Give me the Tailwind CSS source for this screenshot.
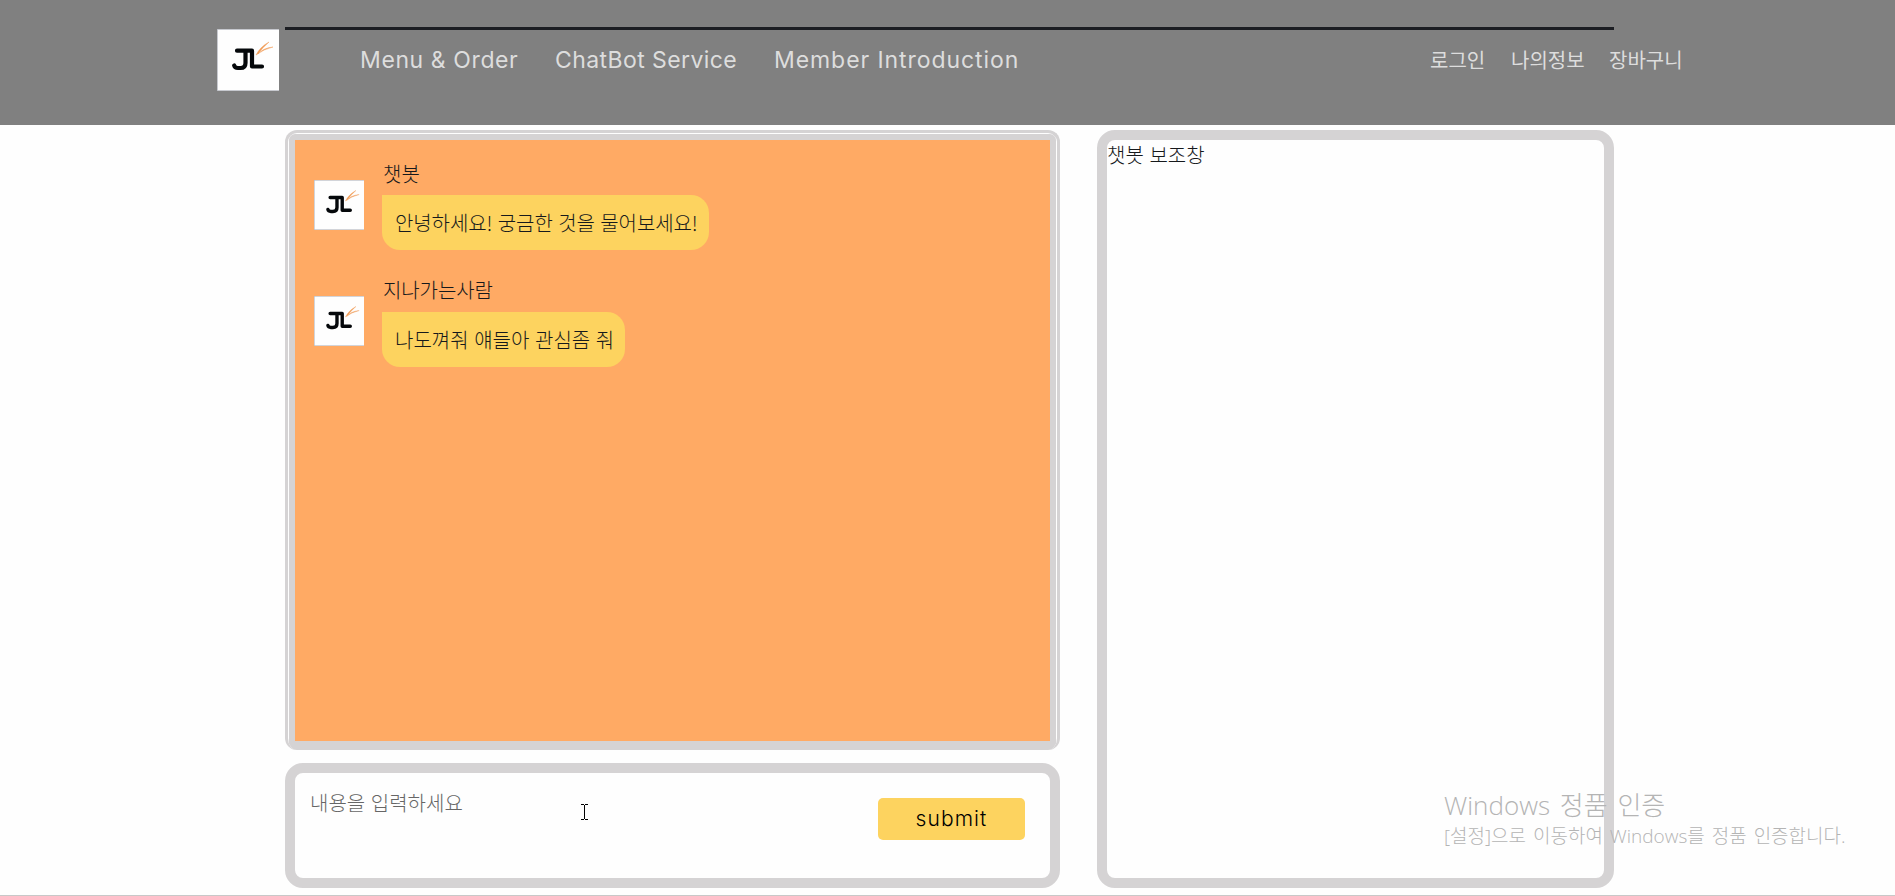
<!DOCTYPE html>
<html lang="ko">
<head>
<meta charset="utf-8">
<title>ChatBot Service</title>
<script src="https://cdn.jsdelivr.net/npm/@tailwindcss/browser@4"></script>
</head>
<body class="relative h-[896px] w-[1895px] overflow-hidden bg-[#fefefe] font-['Noto_Sans_CJK_KR',sans-serif] text-[20px] font-light text-[#16191c]">
<svg class="hidden">
  <symbol id="logo" viewBox="0 0 62 62">
    <rect width="62" height="62" fill="#b9bcc4"/>
    <rect x=".8" y=".8" width="61.200" height="60.400" fill="#fefefe"/>
    <path d="M20 21.700H35V37.500H45M28.500 22V34Q28.500 39 23.500 39H21Q17.800 39 17.200 36.500" fill="none" stroke="#05080b" stroke-width="4.200" stroke-linecap="round" stroke-linejoin="round"/>
    <path d="M39 26 Q43 18 52 13 Q45 19 41 25 Q46 19 56 18 Q47 20 39 26Z" fill="#f39a50" stroke="#f0a468" stroke-width=".5"/>
  </symbol>
</svg>
<header class="flex h-[125px] bg-[#808080] pt-[29px] pl-[217px] text-[#dddddd]">
  <svg class="h-[62px] w-[62px] shrink-0"><use href="#logo"/></svg>
  <nav class="ml-[81px] flex h-[62px] items-center font-['Inter',sans-serif] text-[23px] font-normal whitespace-nowrap">
    <a class="w-[195px] tracking-[0.6px]">Menu &amp; Order</a>
    <a class="w-[219px] tracking-[0.42px]">ChatBot Service</a>
    <a class="w-[250px] tracking-[0.93px]">Member Introduction</a>
  </nav>
  <nav class="ml-[406px] flex h-[62px] items-center font-normal whitespace-nowrap">
    <a class="w-[81px]">로그인</a>
    <a class="w-[98px]">나의정보</a>
    <a>장바구니</a>
  </nav>
</header>
<div class="absolute top-[27px] left-[285px] h-[3px] w-[1329px] bg-[#1c1e23]"></div>
<main class="mt-[5px] ml-[285px] flex gap-[37px]">
  <div class="flex w-[775px] flex-col gap-[13px]">
    <section class="h-[620px] overflow-hidden rounded-[12px] border-3 border-b-0 border-[#d5d3d4] bg-[#fefefe] px-px pt-px">
      <div class="h-[616px] rounded-t-[6px] border-6 border-b-9 border-[#d5d3d4] bg-[#d5d3d4]">
        <div class="flex h-[601px] flex-col bg-[#ffaa64] pt-[20px] pl-[19px]">
          <article class="flex h-[117px]">
            <svg class="mt-[20px] h-[50px] w-[50px]"><use href="#logo"/></svg>
            <div class="ml-[18px] flex flex-col items-start">
              <span class="h-[35px] pl-px leading-[28px]">챗봇</span>
              <p class="h-[55px] w-[327px] rounded-[18px] rounded-tl-none bg-[#fdd35f] pl-[13px] leading-[56px] tracking-[-0.1px] whitespace-nowrap">안녕하세요! 궁금한 것을 물어보세요!</p>
            </div>
          </article>
          <article class="flex h-[117px]">
            <svg class="mt-[19px] h-[50px] w-[50px]"><use href="#logo"/></svg>
            <div class="ml-[18px] flex flex-col items-start">
              <span class="h-[35px] pl-px leading-[26px] tracking-[-0.1px]">지나가는사람</span>
              <p class="h-[55px] w-[243px] rounded-[18px] rounded-tl-none bg-[#fdd35f] pl-[13px] leading-[55px] whitespace-nowrap">나도껴줘 얘들아 관심좀 줘</p>
            </div>
          </article>
        </div>
      </div>
    </section>
    <section class="flex h-[125px] items-start justify-between rounded-[18px] border-10 border-[#d5d3d4] pr-[25px] pl-[15px]">
      <span class="mt-[15px] leading-[30px] text-[#666666]">내용을 입력하세요</span>
      <button class="mt-[25px] h-[42px] w-[147px] rounded-[5px] bg-[#fdd35f] font-['Inter',sans-serif] text-[21px] font-light tracking-[1.100px] text-black">submit</button>
    </section>
  </div>
  <aside class="h-[758px] w-[517px] rounded-[18px] border-10 border-[#d5d3d4] leading-[30px]">챗봇 보조창</aside>
</main>
<div class="absolute top-[895px] left-0 h-px w-full bg-[#c8c8c8]"></div>
<!-- activation watermark -->
<div class="absolute top-[787px] left-[1444px] whitespace-nowrap text-[#b4b4b4] font-['Open_Sans','Noto_Sans_CJK_KR',sans-serif]">
  <p class="text-[26px] leading-[36px] [word-spacing:3px]">Windows 정품 인증</p>
  <p class="text-[19px] leading-[26px] [word-spacing:2px]">[설정]으로 이동하여 Windows를 정품 인증합니다.</p>
</div>
<!-- text cursor -->
<svg class="absolute top-[804px] left-[581px] h-[16px] w-[7px]" viewBox="0 0 7 16" fill="none" stroke="#000" shape-rendering="crispEdges"><path d="M0 .5H3M4 .5H7M3.500 1V15M0 15.500H3M4 15.500H7"/></svg>
</body>
</html>
